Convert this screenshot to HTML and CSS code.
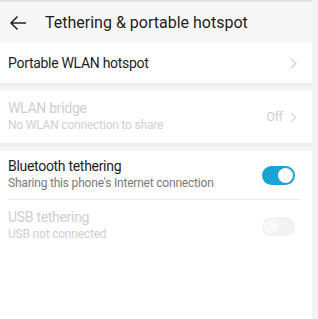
FILE: index.html
```html
<!DOCTYPE html>
<html lang="en">
<head>
    <meta charset="UTF-8">
    <meta name="viewport" content="width=device-width, initial-scale=1.0">
    <title>Tethering & portable hotspot</title>
    <link rel="stylesheet" href="styles.css">
</head>
<body>
    <div class="screen">
        <div class="header">
            <svg class="back" width="18" height="16" viewBox="0 0 18 16">
                <path d="M17 8H2M8.5 1.5L2 8l6.5 6.5" fill="none" stroke="#222" stroke-width="1.5"/>
            </svg>
            <h1 class="title">Tethering &amp; portable hotspot</h1>
        </div>

        <div class="card">
            <div class="row single">
                <div class="label">Portable WLAN hotspot</div>
                <span class="chevron"></span>
            </div>
        </div>

        <div class="gap"></div>

        <div class="card">
            <div class="row disabled">
                <div class="texts">
                    <div class="label">WLAN bridge</div>
                    <div class="sub">No WLAN connection to share</div>
                </div>
                <span class="value">Off</span>
                <span class="chevron"></span>
            </div>
        </div>

        <div class="gap"></div>

        <div class="card last">
            <div class="row short">
                <div class="texts">
                    <div class="label">Bluetooth tethering</div>
                    <div class="sub">Sharing this phone's Internet connection</div>
                </div>
                <span class="switch on"></span>
            </div>
            <div class="divider"></div>
            <div class="row disabled">
                <div class="texts">
                    <div class="label">USB tethering</div>
                    <div class="sub">USB not connected</div>
                </div>
                <span class="switch off"></span>
            </div>
        </div>
    </div>
</body>
</html>
```

FILE: styles.css
```css
html, body {
    margin: 0;
    padding: 0;
}
body {
    font-family: Roboto, "Noto Sans", sans-serif;
    background: #f3f3f3;
}
.screen {
    width: 312px;
    height: 319px;
    display: flex;
    flex-direction: column;
    background: #f6f6f6;
    border-top: 2px solid #e4e4e4;
    box-sizing: border-box;
}
.header {
    height: 41px;
    display: flex;
    align-items: center;
    padding-left: 9px;
    background: #f7f7f7;
}
.back {
    margin-right: 18px;
}
.title {
    margin: 0;
    font-size: 16px;
    font-weight: 400;
    color: #1e1e1e;
}
.card {
    background: #fff;
}
.card.last {
    flex: 1;
}
.gap {
    height: 8px;
    background: linear-gradient(#ececec, #f8f8f8);
}
.row {
    display: flex;
    align-items: center;
    padding: 0 15px 0 8px;
    height: 52px;
}
.row.single {
    height: 40px;
}
.row.short {
    height: 48px;
}
.texts {
    flex: 1;
}
.row.single .label {
    flex: 1;
}
.label {
    font-size: 14px;
    letter-spacing: -0.3px;
    color: #1e1e1e;
    line-height: 17px;
}
.sub {
    font-size: 12px;
    letter-spacing: -0.2px;
    color: #7a7a7a;
    line-height: 17px;
}
.disabled .label,
.disabled .sub,
.disabled .value {
    color: #cfcfcf;
}
.value {
    font-size: 12px;
    margin-right: 5px;
}
.chevron {
    width: 6px;
    height: 6px;
    border-top: 1px solid #c4c4c4;
    border-right: 1px solid #c4c4c4;
    transform: rotate(45deg);
    margin-right: 2px;
}
.disabled .chevron {
    border-color: #d4d4d4;
}
.switch {
    width: 33px;
    height: 19px;
    border-radius: 10px;
    position: relative;
    margin-right: 2px;
    box-sizing: border-box;
}
.switch::after {
    content: "";
    position: absolute;
    top: 2px;
    width: 15px;
    height: 15px;
    border-radius: 50%;
    background: #fff;
}
.switch.on {
    background: #1aa3d4;
}
.switch.on::after {
    right: 2px;
}
.switch.off {
    background: #f2f2f2;
}
.switch.off::after {
    left: 2px;
    background: #f8f8f8;
}
.divider {
    height: 1px;
    margin: 0 12px 0 8px;
    background: #ececec;
}
```
